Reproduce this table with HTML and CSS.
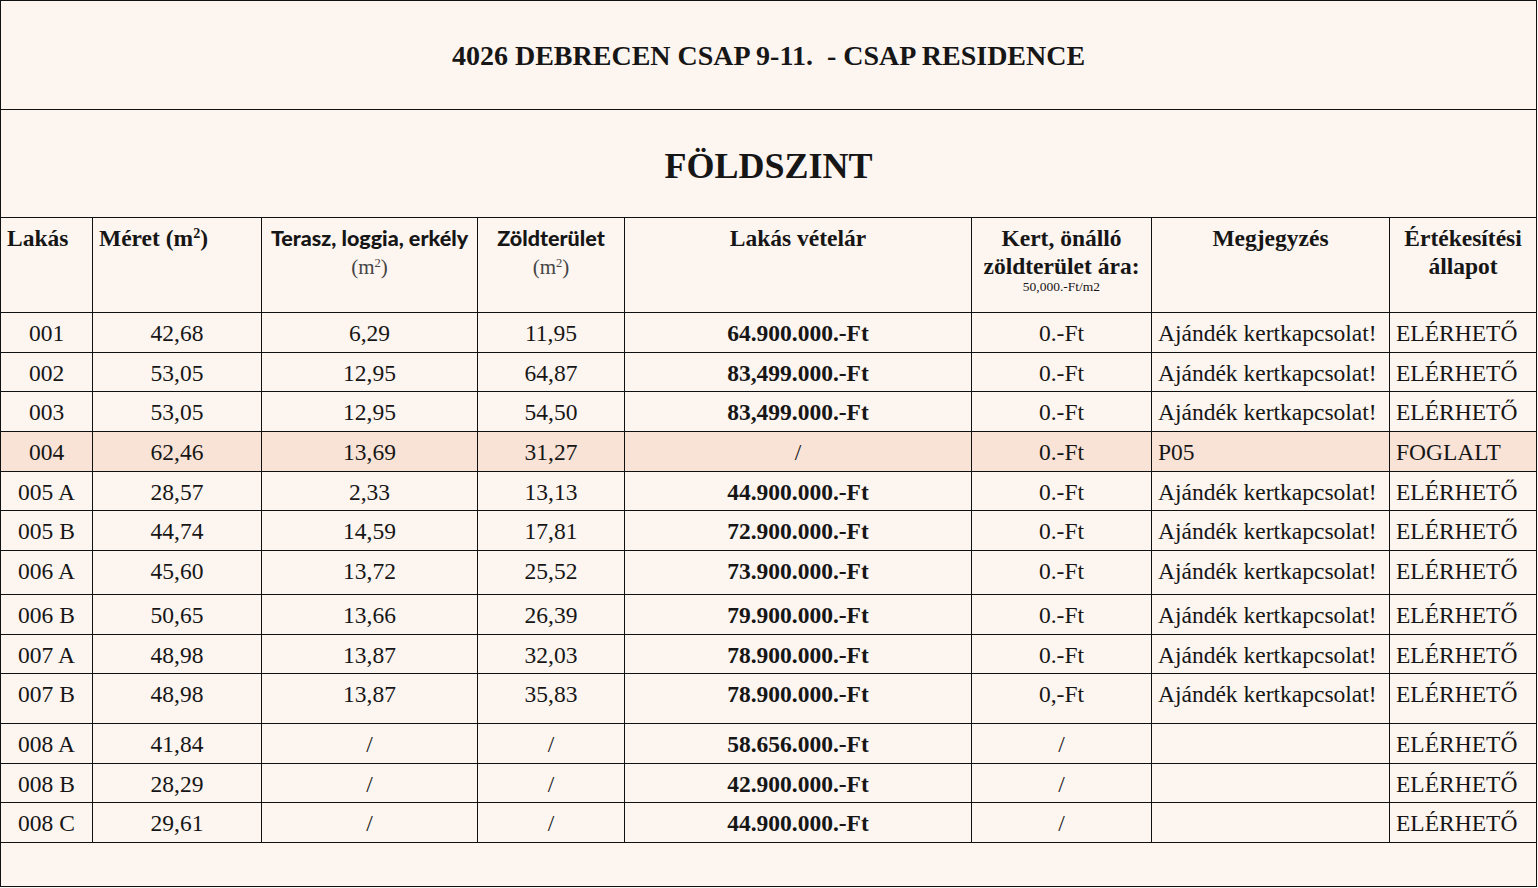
FILE: index.html
```html
<!DOCTYPE html>
<html lang="hu">
<head>
<meta charset="utf-8">
<title>Csap Residence - Földszint</title>
<link rel="stylesheet" href="styles.css">
</head>
<body>
<table class="price-table">
  <colgroup>
    <col class="c1"><col class="c2"><col class="c3"><col class="c4"><col class="c5"><col class="c6"><col class="c7"><col class="c8">
  </colgroup>
  <tr class="title-row">
    <td colspan="8" class="title">4026 DEBRECEN CSAP 9-11. &nbsp;- CSAP RESIDENCE</td>
  </tr>
  <tr class="floor-row">
    <td colspan="8" class="floor">FÖLDSZINT</td>
  </tr>
  <tr class="head-row">
    <th class="left">Lakás</th>
    <th class="left">Méret (m<sup>2</sup>)</th>
    <th><span class="sans">Terasz, loggia, erkély</span><br><span class="unit">(m<sup>2</sup>)</span></th>
    <th><span class="sans">Zöldterület</span><br><span class="unit">(m<sup>2</sup>)</span></th>
    <th>Lakás vételár</th>
    <th>Kert, önálló zöldterület ára:<br><span class="small">50,000.-Ft/m2</span></th>
    <th>Megjegyzés</th>
    <th>Értékesítési állapot</th>
  </tr>
  <tr class="h40"><td>001</td><td>42,68</td><td>6,29</td><td>11,95</td><td class="price">64.900.000.-Ft</td><td>0.-Ft</td><td class="left">Ajándék kertkapcsolat!</td><td class="left">ELÉRHETŐ</td></tr>
  <tr class="h39"><td>002</td><td>53,05</td><td>12,95</td><td>64,87</td><td class="price">83,499.000.-Ft</td><td>0.-Ft</td><td class="left">Ajándék kertkapcsolat!</td><td class="left">ELÉRHETŐ</td></tr>
  <tr class="h40"><td>003</td><td>53,05</td><td>12,95</td><td>54,50</td><td class="price">83,499.000.-Ft</td><td>0.-Ft</td><td class="left">Ajándék kertkapcsolat!</td><td class="left">ELÉRHETŐ</td></tr>
  <tr class="h40 reserved"><td>004</td><td>62,46</td><td>13,69</td><td>31,27</td><td>/</td><td>0.-Ft</td><td class="left">P05</td><td class="left">FOGLALT</td></tr>
  <tr class="h39"><td>005 A</td><td>28,57</td><td>2,33</td><td>13,13</td><td class="price">44.900.000.-Ft</td><td>0.-Ft</td><td class="left">Ajándék kertkapcsolat!</td><td class="left">ELÉRHETŐ</td></tr>
  <tr class="h40"><td>005 B</td><td>44,74</td><td>14,59</td><td>17,81</td><td class="price">72.900.000.-Ft</td><td>0.-Ft</td><td class="left">Ajándék kertkapcsolat!</td><td class="left">ELÉRHETŐ</td></tr>
  <tr class="h44"><td>006 A</td><td>45,60</td><td>13,72</td><td>25,52</td><td class="price">73.900.000.-Ft</td><td>0.-Ft</td><td class="left">Ajándék kertkapcsolat!</td><td class="left">ELÉRHETŐ</td></tr>
  <tr class="h40"><td>006 B</td><td>50,65</td><td>13,66</td><td>26,39</td><td class="price">79.900.000.-Ft</td><td>0.-Ft</td><td class="left">Ajándék kertkapcsolat!</td><td class="left">ELÉRHETŐ</td></tr>
  <tr class="h39"><td>007 A</td><td>48,98</td><td>13,87</td><td>32,03</td><td class="price">78.900.000.-Ft</td><td>0.-Ft</td><td class="left">Ajándék kertkapcsolat!</td><td class="left">ELÉRHETŐ</td></tr>
  <tr class="h50"><td>007 B</td><td>48,98</td><td>13,87</td><td>35,83</td><td class="price">78.900.000.-Ft</td><td>0,-Ft</td><td class="left">Ajándék kertkapcsolat!</td><td class="left">ELÉRHETŐ</td></tr>
  <tr class="h40"><td>008 A</td><td>41,84</td><td>/</td><td>/</td><td class="price">58.656.000.-Ft</td><td>/</td><td class="left"></td><td class="left">ELÉRHETŐ</td></tr>
  <tr class="h39"><td>008 B</td><td>28,29</td><td>/</td><td>/</td><td class="price">42.900.000.-Ft</td><td>/</td><td class="left"></td><td class="left">ELÉRHETŐ</td></tr>
  <tr class="h40"><td>008 C</td><td>29,61</td><td>/</td><td>/</td><td class="price">44.900.000.-Ft</td><td>/</td><td class="left"></td><td class="left">ELÉRHETŐ</td></tr>
  <tr class="h44 empty-row"><td colspan="8"></td></tr>
</table>
</body>
</html>
```

FILE: styles.css
```css
html, body {
  margin: 0;
  padding: 0;
  background: #fdf5f0;
}

body {
  font-family: "Liberation Serif", "Times New Roman", serif;
  color: #161616;
}

.price-table {
  border-collapse: collapse;
  table-layout: fixed;
  width: 1536px;
  background: #fdf5f0;
}

.c1 { width: 92px; }
.c2 { width: 169px; }
.c3 { width: 216px; }
.c4 { width: 147px; }
.c5 { width: 347px; }
.c6 { width: 180px; }
.c7 { width: 238px; }
.c8 { width: 147px; }

.price-table td,
.price-table th {
  border: 1px solid #111;
  padding: 7px 6px 0 6px;
  font-size: 23.5px;
  line-height: 27px;
  text-align: center;
  vertical-align: top;
  white-space: nowrap;
  font-weight: normal;
  overflow: visible;
}

.price-table th {
  font-weight: bold;
  line-height: 28px;
  padding-top: 6px;
  white-space: normal;
}

.price-table .left {
  text-align: left;
}

.title-row { height: 109px; }
.floor-row { height: 108px; }
.head-row { height: 95px; }

.price-table td.title {
  font-size: 28px;
  font-weight: bold;
  vertical-align: middle;
  padding: 0;
}

.price-table td.floor {
  font-size: 36px;
  font-weight: bold;
  vertical-align: middle;
  padding: 5px 0 0 0;
}

sup {
  font-size: 0.6em;
  line-height: 0;
  vertical-align: 0.55em;
}

.sans {
  font-family: "Lato", "Open Sans", sans-serif;
  font-weight: 900;
  font-size: 21.5px;
}

.unit {
  font-weight: normal;
  font-size: 21px;
  color: #444;
}

.small {
  display: block;
  font-weight: normal;
  font-size: 13.5px;
  line-height: 14px;
}

.price-table td.price {
  font-weight: bold;
}

.h39 { height: 39px; }
.h40 { height: 40px; }
.h44 { height: 44px; }
.h50 { height: 50px; }

.reserved td {
  background: #f9e3d6;
}
```
